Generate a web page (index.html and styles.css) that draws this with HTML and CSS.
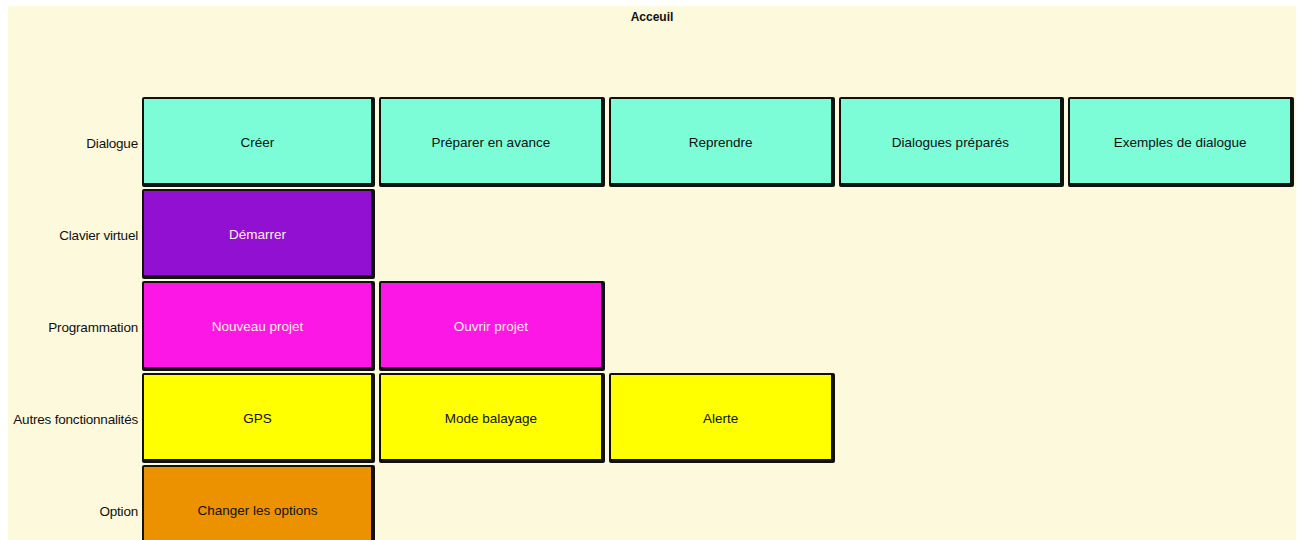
FILE: index.html
```html
<!DOCTYPE html>
<html lang="fr">
<head>
    <meta charset="UTF-8">
    <meta name="viewport" content="width=device-width, initial-scale=1.0">
    <title>Acceuil</title>
    <link rel="stylesheet" href="styles.css">
</head>
<body>

    <div class="page">
        <h1 class="title">Acceuil</h1>

        <div class="menu">
            <div class="label">Dialogue</div>
            <button class="tile teal">Créer</button>
            <button class="tile teal">Préparer en avance</button>
            <button class="tile teal">Reprendre</button>
            <button class="tile teal">Dialogues préparés</button>
            <button class="tile teal">Exemples de dialogue</button>

            <div class="label">Clavier virtuel</div>
            <button class="tile purple">Démarrer</button>
            <div class="empty"></div>
            <div class="empty"></div>
            <div class="empty"></div>
            <div class="empty"></div>

            <div class="label">Programmation</div>
            <button class="tile pink">Nouveau projet</button>
            <button class="tile pink">Ouvrir projet</button>
            <div class="empty"></div>
            <div class="empty"></div>
            <div class="empty"></div>

            <div class="label">Autres fonctionnalités</div>
            <button class="tile yellow">GPS</button>
            <button class="tile yellow">Mode balayage</button>
            <button class="tile yellow">Alerte</button>
            <div class="empty"></div>
            <div class="empty"></div>

            <div class="label">Option</div>
            <button class="tile orange">Changer les options</button>
        </div>
    </div>

</body>
</html>
```

FILE: styles.css
```css
body {
    margin: 0;
    padding: 6px 6px 0 8px;
    background-color: #fff;
    font-family: "Liberation Sans", Arial, sans-serif;
}

.page {
    background-color: #fdf9dc;
    min-height: 534px;
}

.title {
    margin: 0;
    height: 91px;
    padding-top: 4px;
    box-sizing: border-box;
    text-align: center;
    font-size: 12px;
    font-weight: bold;
    color: #111;
}

.menu {
    display: grid;
    grid-template-columns: 130px 233px repeat(4, 1fr);
    grid-auto-rows: 90px;
    column-gap: 4px;
    row-gap: 2px;
    padding-right: 2px;
}

.label {
    display: flex;
    align-items: center;
    justify-content: flex-end;
    padding-top: 2px;
    font-size: 13.5px;
    letter-spacing: -0.2px;
    color: #111;
}

.tile {
    margin: 0;
    padding-top: 4px;
    border: 2px solid #111;
    border-right-width: 4px;
    border-bottom-width: 4px;
    border-radius: 2px;
    font-family: inherit;
    font-size: 13.5px;
    color: #111;
    cursor: pointer;
}

.teal {
    background-color: #7dfcd8;
}

.purple {
    background-color: #9210d2;
    color: #fdf0d8;
}

.pink {
    background-color: #fd17e6;
    color: #fdf0d8;
}

.yellow {
    background-color: #ffff00;
}

.orange {
    background-color: #ec9200;
}
```
